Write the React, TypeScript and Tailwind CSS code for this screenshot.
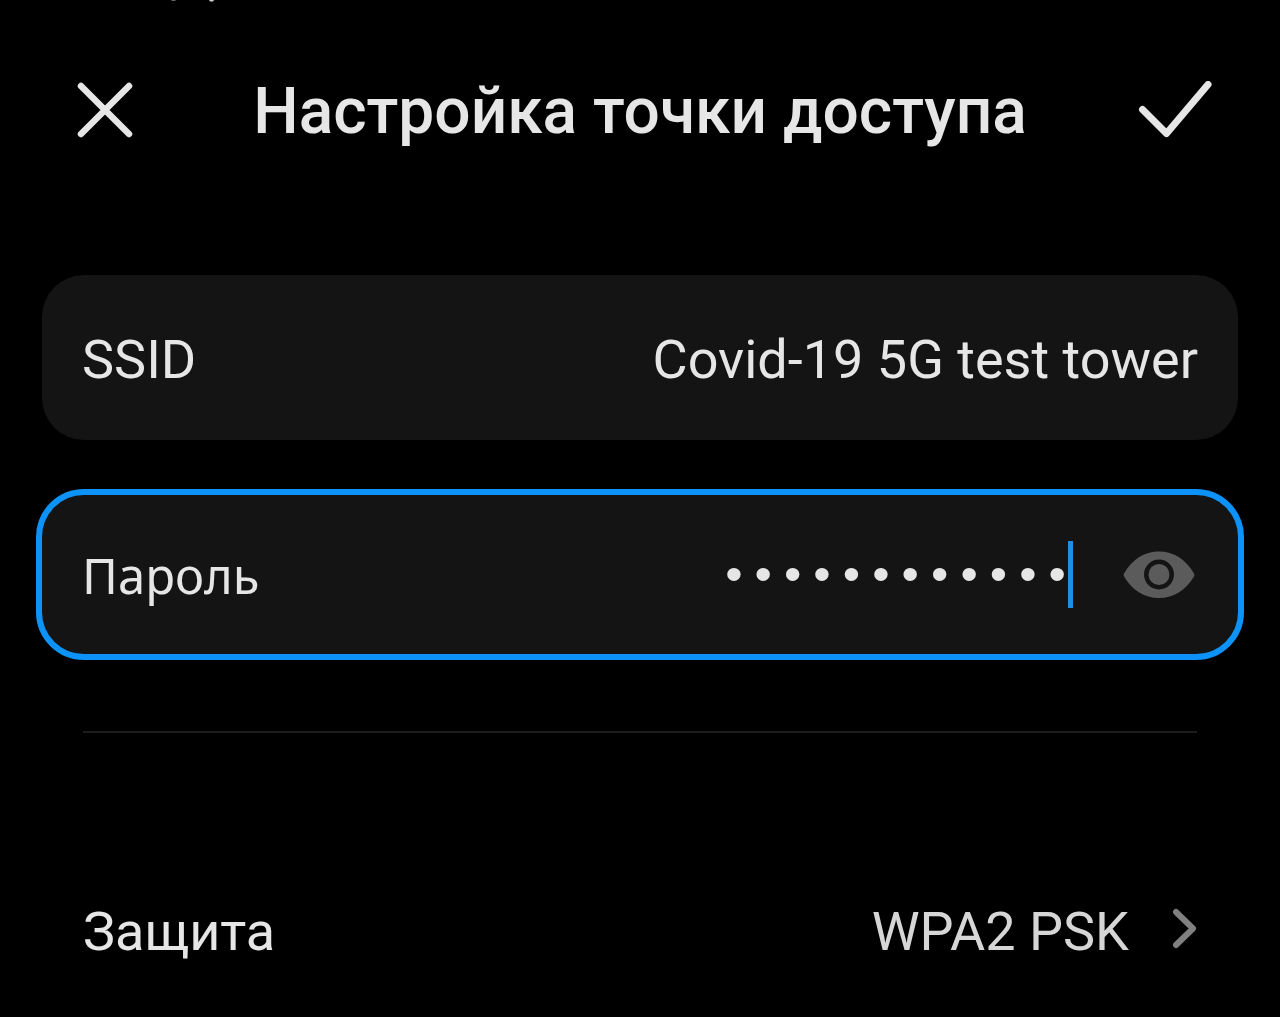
import { useState } from "react";

const iconStroke = {
  fill: "none",
  stroke: "currentColor",
  strokeLinecap: "round",
  strokeLinejoin: "round",
} as const;

function ScrolledEdge() {
  return (
    <svg aria-hidden="true" className="ml-[168px] block" width="48" height="2" viewBox="0 0 48 2">
      <path d="M3 0H8L7 1H4Z" fill="#666666" />
      <path d="M41 0H46L45 1.500H42Z" fill="#d0d0d0" />
    </svg>
  );
}

function Header() {
  return (
    <header className="flex items-center justify-between px-[68px] pt-[50px]">
      <button type="button" aria-label="Закрыть" className="flex h-[116px] w-[74px] items-center justify-center">
        <svg width="56" height="56" viewBox="0 0 56 56" strokeWidth="6.500" {...iconStroke}>
          <path d="M4 4L52 52M52 4L4 52" />
        </svg>
      </button>
      <h1 className="pt-1 text-[64px] leading-[76px] font-medium">Настройка точки доступа</h1>
      <button type="button" aria-label="Сохранить" className="flex h-[116px] w-[74px] items-center justify-center">
        <svg width="74" height="58" viewBox="0 0 74 58" strokeWidth="7" {...iconStroke}>
          <path d="M4.500 28.500L28.500 52.500L70 3.500" />
        </svg>
      </button>
    </header>
  );
}

export default function App() {
  const [ssid, setSsid] = useState("Covid-19 5G test tower");
  const [password, setPassword] = useState("testtower5g1");
  const [visible, setVisible] = useState(false);

  return (
    <main className="min-h-screen overflow-hidden bg-black font-['Roboto',sans-serif] text-[#e6e6e6]">
      <ScrolledEdge />
      <Header />
      <form className="px-9 pt-[107px]" onSubmit={(e) => e.preventDefault()}>
        <div className="mx-[6px] flex h-[165px] items-center rounded-[42px] bg-[#141414] px-[40px] pt-1">
          <label htmlFor="ssid" className="text-[54px] leading-[64px]">SSID</label>
          <input
            id="ssid"
            className="min-w-0 flex-1 bg-transparent text-right text-[54px] leading-[64px] outline-none"
            value={ssid}
            onChange={(e) => setSsid(e.target.value)}
          />
        </div>

        <div className="mt-[49px] flex h-[171px] items-center rounded-[48px] border-[6px] border-[#0d93f8] bg-[#141414] pr-[41px] pl-[40px]">
          <label htmlFor="password" className="font-['Noto_Sans',sans-serif] text-[49px] leading-[64px]">Пароль</label>
          <input
            id="password"
            type={visible ? "text" : "password"}
            className="min-w-0 flex-1 bg-transparent pt-1 text-right font-['Liberation_Mono',monospace] text-[49px] leading-[64px] outline-none"
            value={password}
            onChange={(e) => setPassword(e.target.value)}
          />
          <span className="-ml-1 h-[67px] w-[5px] bg-[#1f8fe6]" />
          <button
            type="button"
            aria-label="Показать пароль"
            aria-pressed={visible}
            onClick={() => setVisible(!visible)}
            className="ml-[50px] text-[#5b5b5b]"
          >
            <svg width="74" height="48" viewBox="0 0 74 48">
              <path
                fill="currentColor"
                d="M1 22.500C9 8.500 21 .5 36 .5S63 8.500 71 22.500Q72 24 71 25.500C63 39 51 47 36 47S9 39 1 25.500Q0 24 1 22.500Z"
              />
              <circle cx="36" cy="23.500" r="12.750" fill="none" stroke="#141414" strokeWidth="4.500" />
            </svg>
          </button>
        </div>

        <hr className="mx-[47px] mt-[71px] border-t-2 border-[#1c1c1c]" />

        <button type="button" className="mt-[147px] flex w-full items-center px-[47px] py-4 text-[54px] leading-[64px]">
          <span className="pt-1">Защита</span>
          <span className="ml-auto pt-1 text-[#d6d6d6]">WPA2 PSK</span>
          <svg className="ml-[42px] text-[#808080]" width="26" height="46" viewBox="0 0 26 46" strokeWidth="6" {...iconStroke}>
            <path d="M5 5L22 21.500L5 38" />
          </svg>
        </button>
      </form>
    </main>
  );
}
